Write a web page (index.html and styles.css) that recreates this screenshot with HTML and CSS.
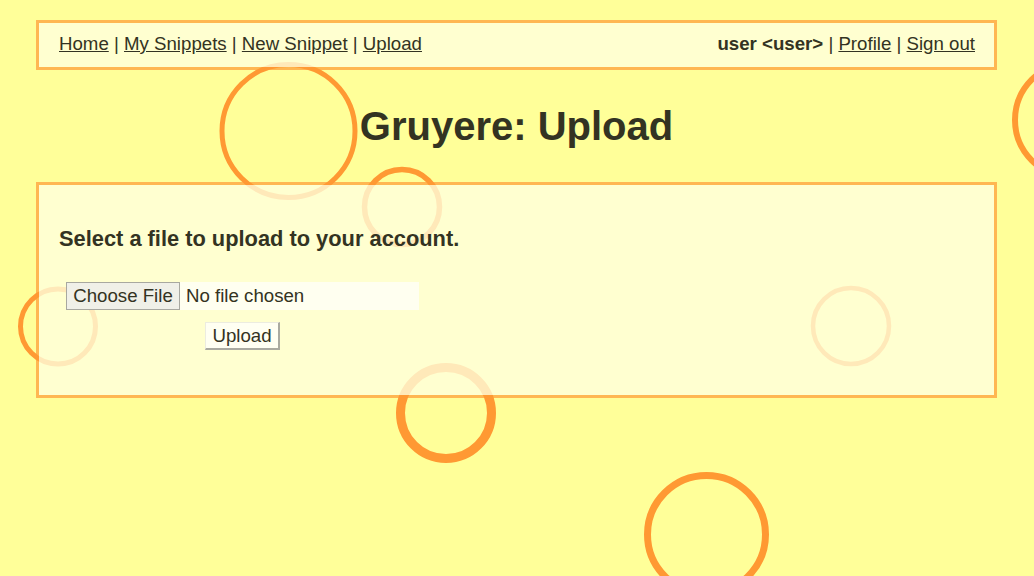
FILE: index.html
```html
<!DOCTYPE html>
<html>
<head>
<meta charset="utf-8">
<title>Gruyere: Upload</title>
<link rel="stylesheet" href="styles.css">
</head>
<body>
<div class="holes" aria-hidden="true">
  <svg width="1034" height="576" viewBox="0 0 1034 576">
    <g fill="none" stroke="#ff9933">
      <circle cx="288.5" cy="131" r="66.5" stroke-width="5"/>
      <circle cx="402" cy="207" r="37.5" stroke-width="5.5"/>
      <circle cx="58" cy="326.5" r="37.5" stroke-width="5"/>
      <circle cx="851" cy="326" r="38" stroke-width="4.5"/>
      <circle cx="446" cy="413" r="45.5" stroke-width="9"/>
      <circle cx="706.5" cy="534.5" r="59" stroke-width="7"/>
      <circle cx="1072" cy="120" r="57" stroke-width="6"/>
    </g>
  </svg>
</div>
<div class="page">
  <div class="menubar">
    <div class="menu-left">
      <a href="#">Home</a> | <a href="#">My Snippets</a> | <a href="#">New Snippet</a> | <a href="#">Upload</a>
    </div>
    <div class="menu-right">
      <b>user &lt;user&gt;</b> | <a href="#">Profile</a> | <a href="#">Sign out</a>
    </div>
  </div>
  <h1 class="title">Gruyere: Upload</h1>
  <div class="content">
    <h3 class="prompt">Select a file to upload to your account.</h3>
    <form class="upload-form">
      <div class="file-input">
        <span class="choose-btn">Choose File</span>
        <span class="file-name">No file chosen</span>
      </div>
      <button type="button" class="submit-btn">Upload</button>
    </form>
  </div>
</div>
</body>
</html>
```
FILE: styles.css
```css
html, body {
  margin: 0;
  padding: 0;
  height: 100%;
}
body {
  background: #ffff99;
  font-family: "Liberation Sans", Arial, sans-serif;
  font-size: 18.67px;
  color: #333322;
  overflow: hidden;
  position: relative;
}
.holes {
  position: absolute;
  left: 0;
  top: 0;
  width: 1034px;
  height: 576px;
  z-index: 0;
}
.holes svg {
  display: block;
}
.page {
  position: relative;
  z-index: 1;
  padding: 20px 37px 0 36px;
}
.menubar {
  display: flex;
  justify-content: space-between;
  background: rgba(255, 255, 223, 0.78);
  background-clip: padding-box;
  border: 3px solid rgba(255, 153, 51, 0.7);
  padding: 10px 19px 13px 20px;
  line-height: 21px;
}
a {
  color: #333322;
  text-decoration: underline;
}
.title {
  margin: 33px 0;
  text-align: center;
  font-size: 40px;
  font-weight: bold;
  line-height: 46px;
}
.content {
  background: rgba(255, 255, 223, 0.78);
  background-clip: padding-box;
  border: 3px solid rgba(255, 153, 51, 0.7);
  padding: 41px 20px 45px 20px;
  display: flex;
  flex-direction: column;
  align-items: flex-start;
}
.prompt {
  margin: 0;
  font-size: 21.84px;
  line-height: 25px;
  font-weight: bold;
}
.upload-form {
  margin: 31px 0 0 7px;
  display: flex;
  flex-direction: column;
  align-items: center;
  gap: 12px;
}
.file-input {
  display: flex;
  width: 353px;
  height: 28px;
  background: #fffff0;
  align-items: stretch;
}
.choose-btn {
  box-sizing: border-box;
  width: 114px;
  height: 28px;
  background: #f0f0e8;
  border: 1px solid #a8a8a0;
  display: flex;
  align-items: center;
  justify-content: center;
  font-size: 18.67px;
  color: #333322;
}
.file-name {
  display: flex;
  align-items: center;
  padding-left: 6px;
  color: #333322;
}
.submit-btn {
  box-sizing: border-box;
  width: 75px;
  height: 28px;
  margin: 0;
  padding: 0;
  background: #fffff2;
  border-top: 1px solid #ecece0;
  border-left: 1px solid #ecece0;
  border-right: 2px solid #aaaaa0;
  border-bottom: 2px solid #aaaaa0;
  font-family: "Liberation Sans", Arial, sans-serif;
  font-size: 18.67px;
  color: #333322;
}
```
